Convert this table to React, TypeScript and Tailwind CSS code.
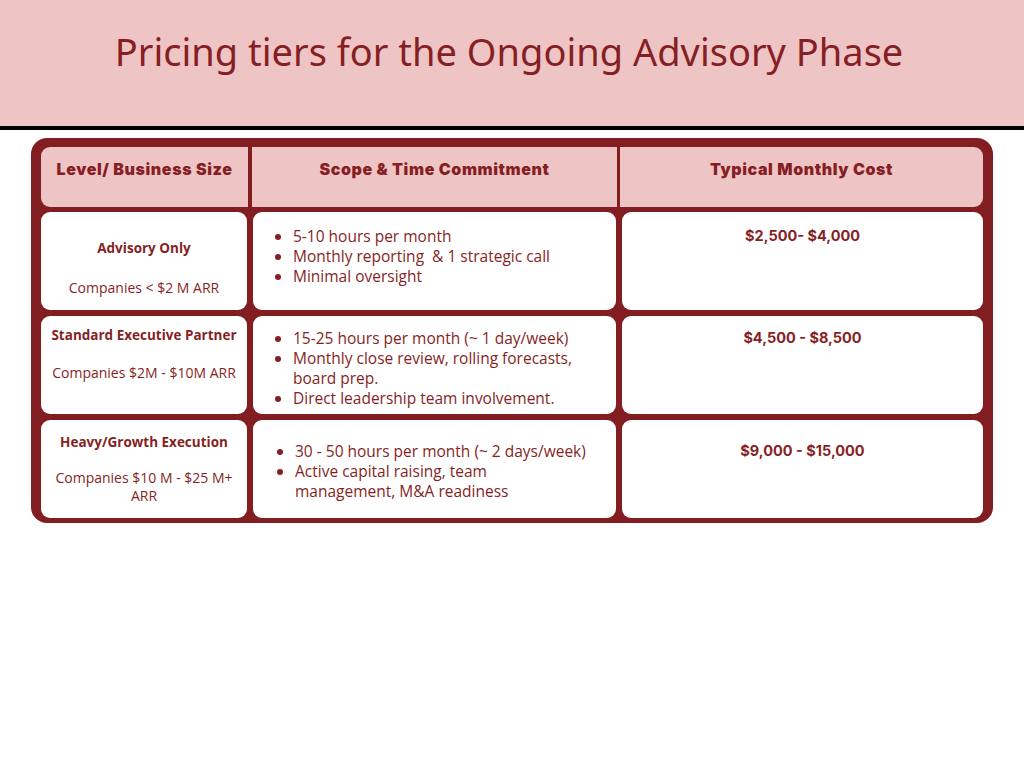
const red = "text-[#861f24]";

type Row = {
  level: string;
  size: string;
  levelPad: string;
  scope: string[];
  scopePad: string;
  cost: string;
  costPad: string;
};

const rows: Row[] = [
  {
    level: "Advisory Only",
    size: "Companies < $2 M ARR",
    levelPad: "pt-[27px] gap-[22px]",
    scope: ["5-10 hours per month", "Monthly reporting  & 1 strategic call", "Minimal oversight"],
    scopePad: "pt-[14px] pl-[24px]",
    cost: "$2,500- $4,000",
    costPad: "pt-[14px]",
  },
  {
    level: "Standard Executive Partner",
    size: "Companies $2M - $10M ARR",
    levelPad: "pt-[10px] gap-[20px]",
    scope: [
      "15-25 hours per month (~ 1 day/week)",
      "Monthly close review, rolling forecasts,\nboard prep.",
      "Direct leadership team involvement.",
    ],
    scopePad: "pt-[12px] pl-[24px]",
    cost: "$4,500 - $8,500",
    costPad: "pt-[12px]",
  },
  {
    level: "Heavy/Growth Execution",
    size: "Companies $10 M - $25 M+ ARR",
    levelPad: "pt-[13px] gap-[18px] px-[10px]",
    scope: ["30 - 50 hours per month (~ 2 days/week)", "Active capital raising, team\nmanagement, M&A readiness"],
    scopePad: "pt-[21px] pl-[26px]",
    cost: "$9,000 - $15,000",
    costPad: "pt-[21px]",
  },
];

export default function App() {
  return (
    <div className="w-[1024px] h-[768px] bg-white overflow-hidden">
      <div className="h-[130px] bg-[#efc4c4] flex justify-center pt-[28px] pr-[6px] border-b-[4px] border-black">
        <h1
          className="text-[38px] text-[#861f24] leading-[46px]"
          style={{ fontFamily: '"Noto Sans", "Open Sans", sans-serif' }}
        >
          Pricing tiers for the Ongoing Advisory Phase
        </h1>
      </div>

      <div
        className="mt-[8px] ml-[31px] w-[962px] bg-[#821d21] rounded-[16px] pt-[9px] px-[10px] pb-[5px] flex flex-col gap-[5px]"
        style={{ fontFamily: '"Open Sans", "Noto Sans", sans-serif' }}
      >
        <div className="h-[60px] bg-[#efc4c4] rounded-[9px] flex">
          <HeadCell className="w-[207px]">Level/ Business Size</HeadCell>
          <div className="w-[4px] bg-[#821d21]" />
          <HeadCell className="w-[365px]">Scope &amp; Time Commitment</HeadCell>
          <div className="w-[3px] bg-[#821d21]" />
          <HeadCell className="flex-1">Typical Monthly Cost</HeadCell>
        </div>

        <div className="flex flex-col gap-[6px]">
          {rows.map((r) => (
            <div key={r.level} className="h-[98px] flex gap-[6px]">
              <div
                className={`w-[206px] bg-white rounded-[9px] flex flex-col items-center text-center ${red} ${r.levelPad}`}
              >
                <div className="text-[13.5px] font-bold leading-[18px]">{r.level}</div>
                <div className="text-[14px] leading-[18px]">{r.size}</div>
              </div>
              <div className={`w-[363px] bg-white rounded-[9px] ${red} ${r.scopePad}`}>
                <ul className="list-disc pl-[16px] text-[15.5px] leading-[20px]">
                  {r.scope.map((s) => (
                    <li key={s} className="whitespace-pre-wrap">
                      {s}
                    </li>
                  ))}
                </ul>
              </div>
              <div
                className={`flex-1 bg-white rounded-[9px] text-center text-[14.5px] font-bold leading-[20px] ${red} ${r.costPad}`}
                style={{ fontFamily: 'Inter, "Open Sans", sans-serif' }}
              >
                {r.cost}
              </div>
            </div>
          ))}
        </div>
      </div>
    </div>
  );
}

function HeadCell({ className, children }: { className: string; children: React.ReactNode }) {
  return (
    <div
      className={`${className} ${red} text-center pt-[12px] text-[16px] font-black tracking-[0.6px] leading-[20px]`}
      style={{ fontFamily: 'Inter, "Open Sans", sans-serif' }}
    >
      {children}
    </div>
  );
}
